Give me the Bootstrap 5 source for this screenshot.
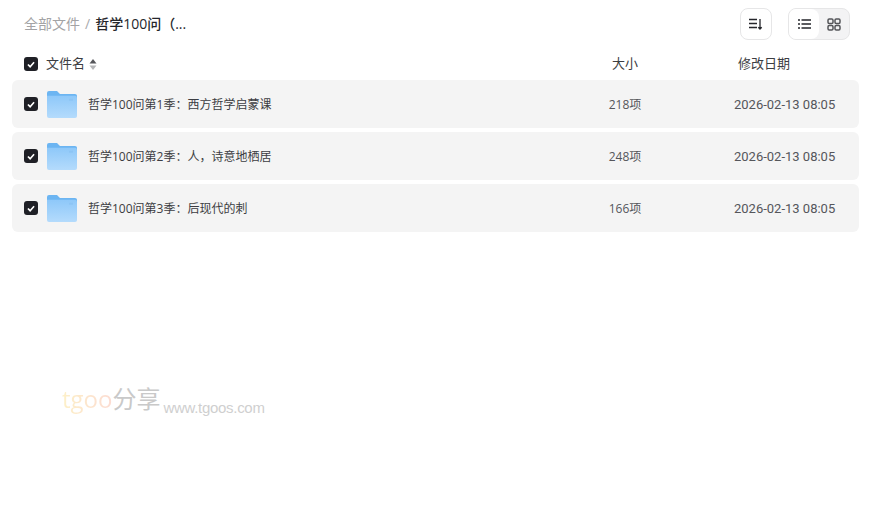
<!DOCTYPE html>
<html lang="zh">
<head>
    <meta charset="UTF-8" />
    <meta name="viewport" content="width=device-width, initial-scale=1" />
    <title>全部文件</title>
    <link href="https://cdn.jsdelivr.net/npm/bootstrap@5.3.3/dist/css/bootstrap.min.css" rel="stylesheet" />
    <style>
        body {
            font-family: "Open Sans", "Noto Sans CJK SC", sans-serif;
            color: #25262b;
            background: #fff;
            height: 514px;
            overflow: hidden;
        }
        .file-page {
            padding: 8px 15px 0 12px;
        }
        .top-bar {
            height: 32px;
            padding-left: 12px;
            margin-right: 9px;
            font-size: 14px;
        }
        .crumb-root { color: #a3a3a5; padding-bottom: 2px; }
        .crumb-sep { color: #a9aaad; margin: 0 5px; padding-bottom: 2px; }
        .crumb-now { font-weight: 500; color: #25262b; padding-bottom: 2px; }
        .tool-btn {
            width: 32px;
            height: 32px;
            border: 1px solid #e6e6e7;
            border-radius: 8px;
            background: #fff;
        }
        .view-switch {
            width: 62px;
            height: 32px;
            border: 1px solid #e6e6e7;
            border-radius: 8px;
            overflow: hidden;
            background: #f3f3f4;
        }
        .view-switch > div {
            width: 30px;
            height: 100%;
        }
        .view-on {
            background: #fff;
            border-radius: 0 8px 8px 0;
        }
        .head-row {
            height: 40px;
            padding-top: 8px;
            font-size: 13px;
            color: #3c3d42;
        }
        .file-row {
            height: 48px;
            margin-bottom: 4px;
            border-radius: 6px;
            background: #f4f4f4;
            font-size: 12px;
        }
        .tick-box {
            width: 14px;
            height: 14px;
            border-radius: 3px;
            background: #1f2026;
            margin-left: 12px;
            flex: none;
        }
        .name-cell { width: 568px; flex: none; }
        .size-cell { width: 90px; flex: none; }
        .date-head { width: 165px; flex: none; padding-left: 68px; }
        .date-cell {
            width: 165px;
            flex: none;
            padding-left: 64px;
            font-family: "Roboto", sans-serif;
            font-size: 13px;
            white-space: nowrap;
        }
        .row-text { color: #55565b; padding-top: 2px; }
        .name-text { color: #3c3d42; padding-top: 2px; }
        .folder-icon { margin: 1px 11px 0 9px; flex: none; }
        .mark-text {
            position: absolute;
            left: 62px;
            top: 383px;
            white-space: nowrap;
            line-height: 32px;
        }
        .mark-logo {
            font-size: 24px;
            color: transparent;
            background: linear-gradient(90deg, #fdf0c8, #fcdcd2);
            -webkit-background-clip: text;
            background-clip: text;
        }
        .mark-cn { font-size: 24px; color: #c9c9c9; }
        .mark-url {
            font-family: "Liberation Sans", sans-serif;
            font-size: 15px;
            letter-spacing: -0.3px;
            color: #cfcfcf;
            margin-left: 3px;
            vertical-align: -5px;
        }
    </style>
</head>
<body>

<div class="file-page">
    <!-- breadcrumb and view buttons -->
    <div class="top-bar d-flex align-items-center">
        <span class="crumb-root">全部文件</span>
        <span class="crumb-sep">/</span>
        <span class="crumb-now">哲学100问（...</span>
        <div class="d-flex ms-auto gap-3">
            <div class="tool-btn d-flex align-items-center justify-content-center">
                <svg width="14" height="12" viewBox="0 0 14 12" fill="none" stroke="#25262b" stroke-width="1.3">
                    <path d="M0 1.5H8M0 5.5H8M0 9.5H8M11 1V11M9.3 9.2L11 11L12.7 9.2" />
                </svg>
            </div>
            <div class="view-switch d-flex">
                <div class="view-on d-flex align-items-center justify-content-center">
                    <svg width="13" height="10" viewBox="0 0 13 10" fill="none" stroke="#25262b" stroke-width="1.4">
                        <path d="M0 1H2M3.5 1H13M0 5H2M3.5 5H13M0 9H2M3.5 9H13" />
                    </svg>
                </div>
                <div class="d-flex align-items-center justify-content-center">
                    <svg width="14" height="13" viewBox="0 0 14 13" fill="none" stroke="#55565a" stroke-width="1.5">
                        <rect x="1" y="1" width="5" height="4.5" rx="1.2" />
                        <rect x="8" y="1" width="5" height="4.5" rx="1.2" />
                        <rect x="1" y="7.5" width="5" height="4.5" rx="1.2" />
                        <rect x="8" y="7.5" width="5" height="4.5" rx="1.2" />
                    </svg>
                </div>
            </div>
        </div>
    </div>

    <!-- column headers -->
    <div class="head-row d-flex align-items-center" id="list-head"></div>

    <!-- rows -->
    <div id="list-body"></div>
</div>

<div class="mark-text">
    <span class="mark-logo">tgoo</span><span class="mark-cn">分享</span><span class="mark-url">www.tgoos.com</span>
</div>

<svg width="0" height="0" class="d-block">
    <defs>
        <linearGradient id="folder-front" x1="0" y1="0" x2="0" y2="1">
            <stop offset="0" stop-color="#8ec8f9" />
            <stop offset="1" stop-color="#b4dbfc" />
        </linearGradient>
    </defs>
</svg>

<script>
    const files = [
        { name: "哲学100问第1季：西方哲学启蒙课", size: "218项", date: "2026-02-13 08:05" },
        { name: "哲学100问第2季：人，诗意地栖居", size: "248项", date: "2026-02-13 08:05" },
        { name: "哲学100问第3季：后现代的刺", size: "166项", date: "2026-02-13 08:05" }
    ];

    const tick = `<div class="tick-box d-flex align-items-center justify-content-center">
        <svg width="8" height="7" viewBox="0 0 9 8" fill="none" stroke="#fff" stroke-width="1.9"><path d="M1 4L3.5 6.5L8 1.5" /></svg>
    </div>`;

    const folder = `<svg class="folder-icon" width="30" height="27" viewBox="0 0 30 28" preserveAspectRatio="none">
        <path d="M0 2a2 2 0 0 1 2-2h8l3 3h15a2 2 0 0 1 2 2v5H0z" fill="#6cb5f2" />
        <path d="M0 5h28a2 2 0 0 1 2 2V26a2 2 0 0 1-2 2H2a2 2 0 0 1-2-2z" fill="url(#folder-front)" />
        <rect x="22" y="8" width="4" height="2" fill="#8cc4f5" />
    </svg>`;

    document.getElementById("list-head").innerHTML = `
        <div class="name-cell d-flex align-items-center">${tick}
            <span class="ms-2">文件名</span>
            <svg class="ms-1" width="8" height="11" viewBox="0 0 8 11"><path d="M4 0L7.5 4.5H.5z" fill="#55565a" /><path d="M4 11L7.5 6.5H.5z" fill="#b4b5b7" /></svg>
        </div>
        <div class="size-cell text-center">大小</div>
        <div class="date-head">修改日期</div>`;

    document.getElementById("list-body").innerHTML = files.map(f => `
        <div class="file-row d-flex align-items-center">
            <div class="name-cell d-flex align-items-center">${tick}${folder}<span class="name-text">${f.name}</span></div>
            <div class="size-cell text-center row-text">${f.size}</div>
            <div class="date-cell row-text">${f.date}</div>
        </div>`).join("");
</script>
<script src="https://cdn.jsdelivr.net/npm/bootstrap@5.3.3/dist/js/bootstrap.bundle.min.js"></script>
</body>
</html>
